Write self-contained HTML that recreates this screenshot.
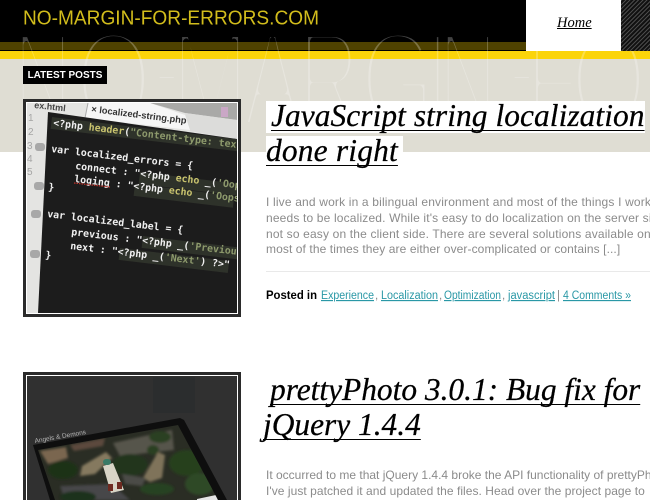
<!DOCTYPE html>
<html><head><meta charset="utf-8"><title>No-Margin-For-Errors</title>
<style>
html,body{margin:0;padding:0;background:#fff}
body{width:650px;height:500px;overflow:hidden;position:relative;font-family:"Liberation Sans",Arial,sans-serif}
.a{position:absolute}
.t{position:absolute;margin:0;height:32px;background:#fff;font:italic 400 31.4px/30px "Liberation Serif",serif;color:#000;white-space:nowrap;box-sizing:border-box;-webkit-text-stroke:.25px #000}
.t span{text-decoration:underline;text-decoration-thickness:1px;text-underline-offset:3.5px;text-decoration-skip-ink:none}
.p{position:absolute;left:266px;width:384px;overflow:hidden;font-size:12px;line-height:15.8px;color:#8b8b8b;white-space:nowrap}
</style></head><body>
<div class="a" style="left:0;top:0;width:650px;height:42px;background:#000"></div>
<div class="a" style="left:0;top:42px;width:650px;height:8px;background:#4f4200"></div>
<div class="a" style="left:0;top:50px;width:650px;height:1px;background:#000"></div>
<div class="a" style="left:0;top:51px;width:650px;height:8px;background:#fbd40a"></div>
<div class="a" style="left:0;top:59px;width:650px;height:93px;background:#dfddd3"></div>

<svg class="a" style="left:0;top:0" width="650" height="152">
<defs><mask id="g" maskUnits="userSpaceOnUse" x="0" y="0" width="650" height="152">
<g font-family="Liberation Sans" font-size="138" fill="#fff" stroke="#000" stroke-width="10" stroke-linejoin="round">
<text transform="translate(13,127) scale(.6,1)">N</text>
<text transform="translate(75,127) scale(.72,1)">O</text>
<text transform="translate(153,114) scale(.6,1)">-</text>
<text transform="translate(171,127) scale(.68,1)">M</text>
<text transform="translate(243,127) scale(.64,1)">A</text>
<text transform="translate(298,127) scale(.62,1)">R</text>
<text transform="translate(360,127) scale(.7,1)">G</text>
<text transform="translate(428,127) scale(.5,1)">I</text>
<text transform="translate(438,127) scale(.6,1)">N</text>
<text transform="translate(508,114) scale(.6,1)">-</text>
<text transform="translate(526,127) scale(.62,1)">F</text>
<text transform="translate(570,127) scale(.72,1)">O</text>
</g></mask></defs>
<rect width="650" height="152" fill="#fff" opacity=".26" mask="url(#g)"/>
</svg>

<div class="a" style="left:526px;top:0;width:95px;height:51px;background:#fff"></div>
<div class="a" style="left:621px;top:0;width:29px;height:51px;background:repeating-linear-gradient(135deg,#4a4a4a 0 1px,#111 1px 3px)"></div>
<div class="a" style="left:557px;top:14px;font:italic 14.5px/18px 'Liberation Serif',serif;color:#000;text-decoration:underline">Home</div>

<svg class="a" style="left:0;top:0" width="330" height="30"><text x="23" y="24.5" font-family="Liberation Sans" font-size="20.5" fill="#d2bd1c" textLength="296" lengthAdjust="spacingAndGlyphs">NO-MARGIN-FOR-ERRORS.COM</text></svg>

<div class="a" style="left:23px;top:66px;width:84px;height:18px;background:#000;color:#fff;font-weight:700;font-size:10px;line-height:20px;text-align:center;white-space:nowrap">LATEST POSTS</div>

<!-- image 1 -->
<div class="a" style="left:23px;top:99px;width:218px;height:218px;background:#2b2b2b"></div>
<div class="a" style="left:26px;top:102px;width:212px;height:212px;background:#fff"></div>
<svg class="a" style="left:27px;top:103px" width="210" height="210" viewBox="27 103 210 210">
<defs><filter id="s" x="-5%" y="-5%" width="110%" height="110%"><feGaussianBlur stdDeviation=".35"/></filter></defs>
<g filter="url(#s)">
<rect x="27" y="103" width="210" height="210" fill="#e4e4e2"/>
<polygon points="150,103 237,103 237,120 185,113" fill="#a9a9a7"/>
<polygon points="185,113 237,120 237,139 190,131" fill="#dcdcda"/>
<polygon points="88,103 150,103 185,115 190,130 85,118" fill="#f6f6f6"/>
<line x1="85" y1="118" x2="88" y2="103" stroke="#aaa" stroke-width="1"/>
<polygon points="48,112 237,139 237,313 38,313" fill="#1b1b1b"/>
<rect x="221" y="107" width="7" height="10" fill="#caa7c6"/>
<text transform="translate(34,108) rotate(6)" font-family="Liberation Sans" font-size="9" font-weight="700" fill="#444">ex.html</text>
<text transform="translate(91,112) rotate(7)" font-family="Liberation Sans" font-size="9.3" font-weight="700" fill="#333">× localized-string.php</text>
<g fill="#a5a5a5" font-family="Liberation Sans" font-size="10"><text x="28" y="121">1</text><text x="28" y="135">2</text><text x="27" y="149">3</text><text x="27" y="162">4</text><text x="27" y="175">5</text></g>
<g fill="#a8a8a8"><rect x="35" y="143" width="10" height="8" rx="3"/><rect x="34" y="182" width="10" height="8" rx="3"/><rect x="31" y="210" width="10" height="8" rx="3"/><rect x="30" y="250" width="10" height="8" rx="3"/></g>
<g fill="#2f302b">
<rect x="0" y="0" width="190" height="12" transform="translate(52,117) rotate(6.8)"/>
<rect x="0" y="0" width="100" height="12" transform="translate(140,172) rotate(6.8)"/>
<rect x="0" y="0" width="100" height="12" transform="translate(135,184) rotate(6.8)"/>
<rect x="0" y="0" width="100" height="12" transform="translate(143,236) rotate(6.8)"/>
<rect x="0" y="0" width="110" height="12" transform="translate(120,248) rotate(6.8)"/>
</g>
<g font-family="DejaVu Sans Mono" font-size="9.9" font-weight="700" fill="#f0f0f0" xml:space="preserve">
<text transform="translate(53,126) rotate(6.8)">&lt;?php <tspan fill="#c9c46e">header</tspan>(<tspan fill="#8d9a6c">"Content-type: text</tspan></text>
<text transform="translate(51,152) rotate(6.8)">var localized_errors = {</text>
<text transform="translate(75,169) rotate(6.8)">connect : "&lt;?php <tspan fill="#c9c46e">echo</tspan> _(<tspan fill="#8d9a6c">'Oop</tspan></text>
<text transform="translate(74,182) rotate(6.8)">loging : "&lt;?php <tspan fill="#c9c46e">echo</tspan> _(<tspan fill="#8d9a6c">'Oops</tspan></text>
<text transform="translate(48,190) rotate(6.8)">}</text>
<text transform="translate(47,217) rotate(6.8)">var localized_label = {</text>
<text transform="translate(71,235) rotate(6.8)">previous : "&lt;?php _(<tspan fill="#8d9a6c">'Previous</tspan></text>
<text transform="translate(70,249) rotate(6.8)">next : "&lt;?php _(<tspan fill="#8d9a6c">'Next'</tspan>) ?&gt;"</text>
<text transform="translate(45,258) rotate(6.8)">}</text>
</g>
<line x1="74" y1="183" x2="110" y2="187" stroke="#c8322a" stroke-width="1.2" stroke-dasharray="1.5 1"/>
</g>
</svg>

<!-- image 2 -->
<div class="a" style="left:23px;top:372px;width:218px;height:128px;background:#2b2b2b"></div>
<div class="a" style="left:26px;top:375px;width:212px;height:125px;background:#fff"></div>
<svg class="a" style="left:27px;top:376px" width="210" height="124" viewBox="27 376 210 124">
<defs><filter id="b"><feGaussianBlur stdDeviation="1.3"/></filter><clipPath id="c"><polygon points="38,450 178,425 218,500 55,500"/></clipPath></defs>
<rect x="27" y="376" width="210" height="124" fill="#303030"/>
<rect x="153" y="377" width="42" height="36" fill="#2b2d2e"/>
<polygon points="33,445 180,418 184,420 227,500 50,500" fill="#0e0e0e"/>
<g clip-path="url(#c)"><rect x="30" y="415" width="200" height="90" fill="#2a2d24"/>
<g filter="url(#b)">
<polygon points="70,445 105,438 103,446 74,451" fill="#5c4a3c"/>
<polygon points="113,443 172,430 174,450 120,456" fill="#57554b"/>
<ellipse cx="160" cy="437" rx="11" ry="6" fill="#2b3f24"/>
<ellipse cx="153" cy="450" rx="6" ry="5" fill="#2b3f24"/>
<polygon points="40,451 66,447 68,458 48,464" fill="#7a6650"/>
<ellipse cx="63" cy="470" rx="15" ry="9" fill="#1e3218"/>
<ellipse cx="130" cy="465" rx="18" ry="11" fill="#22361c"/>
<ellipse cx="187" cy="463" rx="18" ry="13" fill="#27401f"/>
<ellipse cx="200" cy="484" rx="15" ry="11" fill="#2f4a27"/>
<ellipse cx="157" cy="489" rx="17" ry="6" fill="#274221"/>
<polygon points="82,466 106,452 112,458 95,474 80,476" fill="#85795f"/>
<polygon points="143,478 158,452 165,455 162,478 150,482" fill="#7f735a"/>
<polygon points="60,486 112,484 130,500 65,500" fill="#46474a"/>
<polygon points="122,474 146,478 142,486 125,484" fill="#4c4b47"/>
<ellipse cx="78" cy="497" rx="18" ry="6" fill="#1c301a"/>
</g>
<polygon points="103,466 113,463 124,490 111,493" fill="#d8d4c6"/>
<rect x="103" y="459" width="8" height="6" fill="#3a7a66" rx="3"/>
<rect x="108" y="484" width="5" height="7" fill="#6e2a20"/><rect x="117" y="482" width="5" height="7" fill="#6e2a20"/>
<polygon points="197,499 216,495 218,500 197,500" fill="#e6e6e6"/>
</g>
<text transform="translate(35,443) rotate(-10)" font-family="Liberation Sans" font-size="6.5" fill="#b4b4b4">Angels &amp; Demons</text>
</svg>

<!-- post 1 -->
<h2 class="t" style="left:266px;top:101px;width:379px;padding-left:5px;letter-spacing:.07px"><span>JavaScript string localization</span></h2>
<h2 class="t" style="left:266px;top:136px;width:137px;letter-spacing:.2px"><span>done right</span></h2>
<div class="p" style="top:195px"><span style="letter-spacing:.17px">I live and work in a bilingual environment and most of the things I work on</span><br><span style="letter-spacing:.16px">needs to be localized. While it's easy to do localization on the server side,</span><br><span style="letter-spacing:.16px">not so easy on the client side. There are several solutions available on the</span><br><span style="letter-spacing:.09px">most of the times they are either over-complicated or contains [...]</span></div>
<div class="a" style="left:266px;top:271px;width:384px;height:1px;background:#e9e9e9"></div>
<svg class="a" style="left:260px;top:284px" width="390" height="20" viewBox="260 284 390 20" font-family="Liberation Sans" font-size="11.5">
<text x="266" y="299" font-weight="700" fill="#000" textLength="51" lengthAdjust="spacingAndGlyphs">Posted in</text>
<g fill="#2a98a6" text-decoration="underline">
<text x="321" y="299" textLength="53" lengthAdjust="spacingAndGlyphs">Experience</text>
<text x="381" y="299" textLength="57" lengthAdjust="spacingAndGlyphs">Localization</text>
<text x="444" y="299" textLength="57" lengthAdjust="spacingAndGlyphs">Optimization</text>
<text x="508" y="299" textLength="47" lengthAdjust="spacingAndGlyphs">javascript</text>
<text x="563" y="299" textLength="68" lengthAdjust="spacingAndGlyphs">4 Comments »</text>
</g>
<g fill="#888"><text x="375" y="299">,</text><text x="439" y="299">,</text><text x="502" y="299">,</text><text x="557" y="299">|</text></g>
</svg>

<!-- post 2 -->
<h2 class="t" style="left:266px;top:375px;width:376px;padding-left:4px"><span>prettyPhoto 3.0.1: Bug fix for</span></h2>
<h2 class="t" style="left:263px;top:410px;width:157px"><span>jQuery 1.4.4</span></h2>
<div class="p" style="top:468px"><span>It occurred to me that jQuery 1.4.4 broke the API functionality of prettyPhoto</span><br><span style="letter-spacing:.05px">I've just patched it and updated the files. Head over the project page to</span></div>
</body></html>
